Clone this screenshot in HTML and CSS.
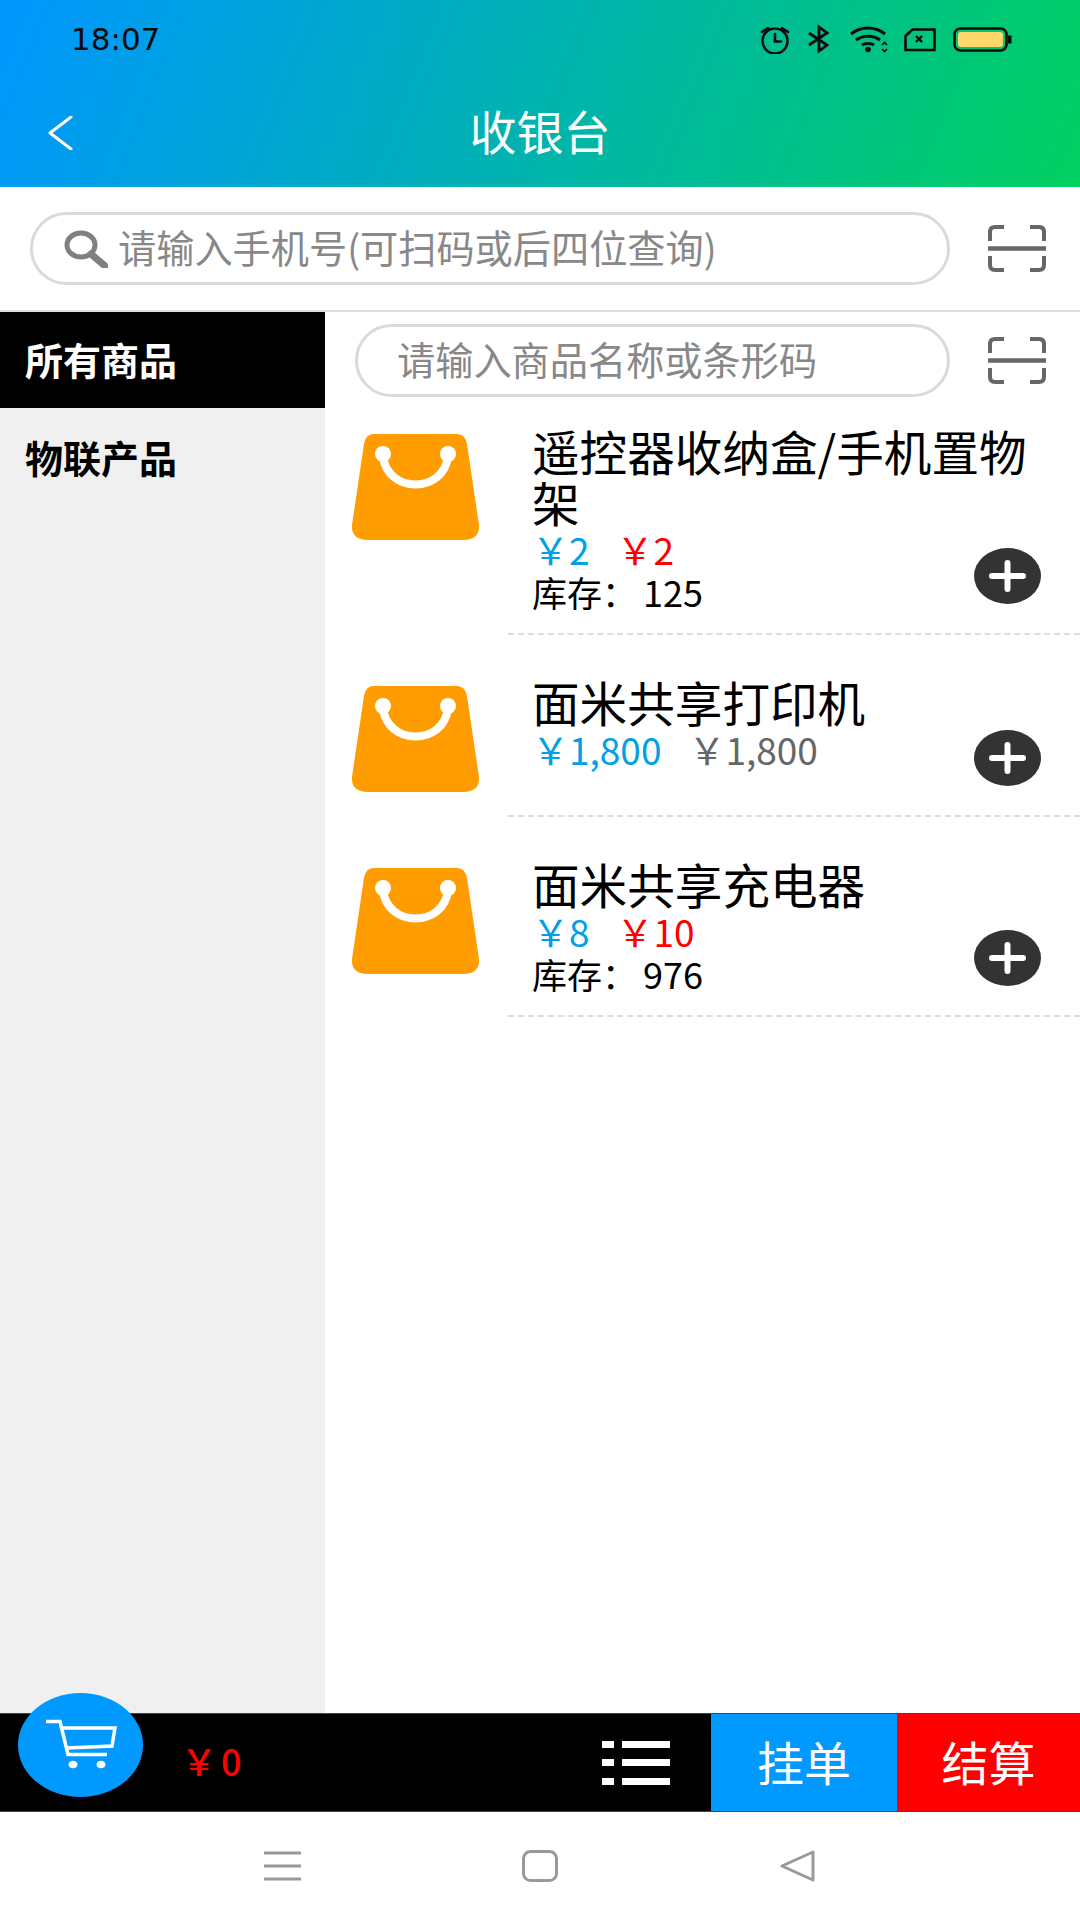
FILE: index.html
```html
<!DOCTYPE html>
<html lang="zh-CN">
<head>
  <meta charset="UTF-8">
  <meta name="viewport" content="width=device-width, initial-scale=1.0">
  <title>收银台</title>
  <link rel="stylesheet" href="styles.css">
</head>
<body>
  <div class="page">
    <header class="header">
      <div class="status-bar">
        <span class="clock">18:07</span>
        <svg class="status-icons" viewBox="760 24 253 30" width="253" height="30" fill="none" stroke="#0a0a0a" stroke-width="2.6">
          <!-- alarm -->
          <circle cx="775" cy="41" r="12.5"/>
          <path d="M762 32l6-4M788 32l-6-4M775 34v7.5h6" stroke-linecap="round"/>
          <!-- bluetooth -->
          <path d="M809 33l18 12-8 6V27l8 6-18 12" stroke-width="2.8"/>
          <!-- wifi -->
          <path d="M851 34c10-8 24-8 34 0M856 40c7-5 17-5 24 0M862 45c3-2 9-2 12 0" stroke-width="3.2"/>
          <circle cx="868" cy="49.5" r="2.8" fill="#0a0a0a" stroke="none"/>
          <path d="M882 45l2.5-2.5 2.500 2.500M882 49l2.500 2.500 2.500-2.500" stroke-width="1.6"/>
          <!-- sim -->
          <path d="M905.500 36l7-6.500h22v20.500h-29z"/>
          <path d="M916 36l6 6M922 36l-6 6" stroke-width="2.400"/>
          <!-- battery -->
          <rect x="954.500" y="28.500" width="52" height="22" rx="6"/>
          <rect x="958" y="32" width="45" height="15" rx="3" fill="#ffd76b" stroke="none"/>
          <rect x="1008" y="35.500" width="3.500" height="8" fill="#0a0a0a" stroke="none"/>
        </svg>
      </div>
      <div class="toolbar">
        <svg class="back" viewBox="0 0 26 34" width="26" height="34" fill="none" stroke="#fff" stroke-width="3">
          <path d="M24 1L3 17l21 16" stroke-linecap="round" stroke-linejoin="round"/>
        </svg>
        <h1 class="title">收银台</h1>
      </div>
    </header>

    <div class="member-row">
      <div class="search-box member-search">
        <svg class="search-icon" viewBox="0 0 44 38" width="44" height="38" fill="none" stroke="#808080">
          <ellipse cx="17" cy="15" rx="14" ry="12" stroke-width="5"/>
          <path d="M27 24l14 12" stroke-width="7" stroke-linecap="round"/>
        </svg>
        <span>请输入手机号(可扫码或后四位查询)</span>
      </div>
      <svg class="scan" viewBox="0 0 58 47" width="58" height="47" fill="none" stroke="#666" stroke-width="4">
        <path d="M2 16V7q0-5 5-5h9M42 2h9q5 0 5 5v9M2 31v9q0 5 5 5h9M42 45h9q5 0 5-5v-9"/>
        <path d="M0 23.500h58" stroke-width="4.500"/>
      </svg>
    </div>

    <div class="content">
      <aside class="sidebar">
        <div class="cat cat-active">所有商品</div>
        <div class="cat">物联产品</div>
      </aside>
      <main class="goods">
        <div class="goods-search">
          <div class="search-box product-search"><span>请输入商品名称或条形码</span></div>
          <svg class="scan" viewBox="0 0 58 47" width="58" height="47" fill="none" stroke="#666" stroke-width="4">
            <path d="M2 16V7q0-5 5-5h9M42 2h9q5 0 5 5v9M2 31v9q0 5 5 5h9M42 45h9q5 0 5-5v-9"/>
            <path d="M0 23.500h58" stroke-width="4.500"/>
          </svg>
        </div>

        <div class="goods-list">
          <div class="item">
            <div class="thumb">
              <svg viewBox="0 0 129 107" width="129" height="107">
                <path d="M22 0H106Q114 0 116 10L128 91Q129 106 112 106H17Q0 106 1 91L13 10Q15 0 22 0Z" fill="#ff9c00"/>
                <path d="M32 22C36 60 93 60 97 22" fill="none" stroke="#fff" stroke-width="8"/>
                <circle cx="32" cy="20" r="8" fill="#fff"/><circle cx="97" cy="20" r="8" fill="#fff"/>
              </svg>
            </div>
            <div class="item-body">
              <div class="item-name">遥控器收纳盒/手机置物架</div>
              <div class="prices"><span class="price">￥2</span><span class="price-alt red">￥2</span></div>
              <div class="stock">库存：<span class="stock-num">125</span></div>
              <div class="add"><svg viewBox="0 0 67 56" width="67" height="56" stroke="#fff" stroke-width="6" stroke-linecap="round"><path d="M18 28h31M33.500 15v26"/></svg></div>
            </div>
          </div>

          <div class="item">
            <div class="thumb">
              <svg viewBox="0 0 129 107" width="129" height="107">
                <path d="M22 0H106Q114 0 116 10L128 91Q129 106 112 106H17Q0 106 1 91L13 10Q15 0 22 0Z" fill="#ff9c00"/>
                <path d="M32 22C36 60 93 60 97 22" fill="none" stroke="#fff" stroke-width="8"/>
                <circle cx="32" cy="20" r="8" fill="#fff"/><circle cx="97" cy="20" r="8" fill="#fff"/>
              </svg>
            </div>
            <div class="item-body">
              <div class="item-name">面米共享打印机</div>
              <div class="prices"><span class="price">￥1,800</span><span class="price-alt gray">￥1,800</span></div>
              <div class="add"><svg viewBox="0 0 67 56" width="67" height="56" stroke="#fff" stroke-width="6" stroke-linecap="round"><path d="M18 28h31M33.500 15v26"/></svg></div>
            </div>
          </div>

          <div class="item">
            <div class="thumb">
              <svg viewBox="0 0 129 107" width="129" height="107">
                <path d="M22 0H106Q114 0 116 10L128 91Q129 106 112 106H17Q0 106 1 91L13 10Q15 0 22 0Z" fill="#ff9c00"/>
                <path d="M32 22C36 60 93 60 97 22" fill="none" stroke="#fff" stroke-width="8"/>
                <circle cx="32" cy="20" r="8" fill="#fff"/><circle cx="97" cy="20" r="8" fill="#fff"/>
              </svg>
            </div>
            <div class="item-body">
              <div class="item-name">面米共享充电器</div>
              <div class="prices"><span class="price">￥8</span><span class="price-alt red">￥10</span></div>
              <div class="stock">库存：<span class="stock-num">976</span></div>
              <div class="add"><svg viewBox="0 0 67 56" width="67" height="56" stroke="#fff" stroke-width="6" stroke-linecap="round"><path d="M18 28h31M33.500 15v26"/></svg></div>
            </div>
          </div>
        </div>
      </main>
    </div>

    <footer class="cart-bar">
      <div class="cart-btn">
        <svg viewBox="0 0 125 104" width="125" height="104" fill="none" stroke="#fff" stroke-width="3.500">
          <path d="M28 28.500h14l8 33h39M42 35h55l-3 18-45 2"/>
          <ellipse cx="55" cy="71.500" rx="4.500" ry="3.800" fill="#fff" stroke="none"/>
          <ellipse cx="83" cy="71.500" rx="4.500" ry="3.800" fill="#fff" stroke="none"/>
        </svg>
      </div>
      <span class="total">￥0</span>
      <svg class="list-icon" viewBox="0 0 68 44" width="68" height="44" fill="#fff">
        <rect y="0" width="12" height="7"/><rect x="20" y="0" width="48" height="7"/>
        <rect y="18" width="12" height="7"/><rect x="20" y="18" width="48" height="7"/>
        <rect y="37" width="12" height="7"/><rect x="20" y="37" width="48" height="7"/>
      </svg>
      <div class="bar-btn bar-hold">挂单</div>
      <div class="bar-btn bar-pay">结算</div>
    </footer>

    <nav class="nav">
      <div class="nav-key">
        <svg viewBox="0 0 37 32" width="37" height="32" stroke="#999" stroke-width="3"><path d="M0 3h37M0 16h37M0 29h37"/></svg>
      </div>
      <div class="nav-key">
        <svg viewBox="0 0 36 32" width="36" height="32" fill="none" stroke="#999" stroke-width="3"><rect x="1.500" y="1.500" width="33" height="29" rx="7"/></svg>
      </div>
      <div class="nav-key">
        <svg viewBox="0 0 36 32" width="36" height="32" fill="none" stroke="#999" stroke-width="3" stroke-linejoin="round"><path d="M33 2v28L2 16z"/></svg>
      </div>
    </nav>
  </div>
</body>
</html>
```

FILE: styles.css
```css
body {
  margin: 0;
  font-family: "Noto Sans CJK SC", "Noto Sans", sans-serif;
  background: #fff;
  color: #000;
}
.page {
  width: 1080px;
  height: 1920px;
  display: flex;
  flex-direction: column;
  position: relative;
  overflow: hidden;
}

/* header */
.header {
  height: 187px;
  background: linear-gradient(112deg, #0096ff, #00d060);
}
.status-bar {
  height: 78px;
  display: flex;
  align-items: center;
  justify-content: space-between;
  padding: 0 67px 0 71px;
}
.clock {
  font-family: "DejaVu Sans", sans-serif;
  font-size: 31px;
  color: #0a0a0a;
}
.toolbar {
  height: 109px;
  display: grid;
  grid-template-columns: 1fr auto 1fr;
  align-items: center;
}
.title {
  margin: 0;
  font-size: 47px;
  line-height: 60px;
  font-weight: 400;
  color: #fff;
  grid-column: 2;
  grid-row: 1;
  padding-bottom: 5px;
}
.back {
  grid-column: 1;
  grid-row: 1;
  margin-left: 47px;
}

/* search */
.member-row {
  height: 125px;
  flex: none;
  display: flex;
  align-items: center;
  padding-left: 30px;
  border-bottom: 2px solid #ddd;
  box-sizing: border-box;
}
.search-box {
  display: flex;
  align-items: center;
  height: 73px;
  box-sizing: border-box;
  border: 3px solid #dadada;
  border-radius: 37px;
  padding-bottom: 4px;
  font-size: 38.200px;
  color: #888;
  background: #fff;
}
.member-search {
  width: 920px;
  padding-left: 31px;
}
.search-icon {
  margin: 4px 10px 0 0;
}
.product-search {
  width: 595px;
  padding-left: 39px;
}
.scan {
  margin-left: 38px;
  flex: none;
}

/* content */
.content {
  flex: 1;
  display: flex;
  min-height: 0;
}
.sidebar {
  width: 325px;
  background: #f0f0f0;
  flex: none;
}
.cat {
  height: 96px;
  line-height: 93px;
  padding-left: 25px;
  font-size: 38px;
  font-weight: 700;
  color: #000;
}
.cat-active {
  background: #000;
  color: #fff;
}
.cat + .cat {
  padding-top: 2px;
}
.goods {
  flex: 1;
  min-width: 0;
}
.goods-search {
  display: flex;
  align-items: center;
  height: 85px;
  padding: 12px 0 0 30px;
  box-sizing: border-box;
}
.goods-list {
  margin-top: -13px;
}
.item {
  display: flex;
  min-height: 182px;
}
.thumb {
  width: 183px;
  flex: none;
  box-sizing: border-box;
  padding: 50px 0 0 26px;
}
.item + .item .thumb {
  padding-top: 51px;
}
.thumb svg {
  display: block;
}
.item-body {
  flex: 1;
  position: relative;
  box-sizing: border-box;
  padding: 41px 30px 21px 24px;
  border-bottom: 2px dashed #ddd;
}
.item-name {
  font-size: 47.600px;
  line-height: 51px;
  color: #000;
}
.prices {
  font-size: 37px;
  line-height: 42px;
  margin-top: 1px;
  color: #00a0e6;
}
.price-alt {
  margin-left: 27px;
}
.red {
  color: #f00;
}
.gray {
  color: #666;
}
.stock {
  font-size: 35px;
  line-height: 42px;
  margin-bottom: -1px;
}
.stock-num {
  margin-left: 6px;
  font-size: 36px;
}
.add {
  position: absolute;
  right: 39px;
  bottom: 29px;
  width: 67px;
  height: 56px;
  border-radius: 50%;
  background: #333;
}
.add svg {
  display: block;
}

/* bottom bar */
.cart-bar {
  height: 97px;
  flex: none;
  display: flex;
  align-items: stretch;
  background: #000;
  border-top: 1px solid #444;
  border-bottom: 1px solid #444;
  position: relative;
}
.cart-btn {
  position: absolute;
  left: 18px;
  top: -21px;
  width: 125px;
  height: 104px;
  border-radius: 50%;
  background: #0099ff;
}
.total {
  align-self: center;
  margin-left: 181px;
  padding-bottom: 5px;
  font-size: 36px;
  font-weight: 500;
  letter-spacing: 4px;
  color: #f00;
}
.list-icon {
  align-self: center;
  margin-left: auto;
  margin-right: 41px;
}
.bar-btn {
  display: flex;
  align-items: center;
  justify-content: center;
  padding-bottom: 5px;
  box-sizing: border-box;
  font-size: 47px;
  color: #fff;
}
.bar-hold {
  width: 186px;
  background: #0099ff;
}
.bar-pay {
  width: 183px;
  background: #f00;
}

/* nav */
.nav {
  height: 108px;
  flex: none;
  display: flex;
  justify-content: center;
  align-items: center;
  background: #fff;
}
.nav-key {
  width: 258px;
  display: flex;
  justify-content: center;
}
```
